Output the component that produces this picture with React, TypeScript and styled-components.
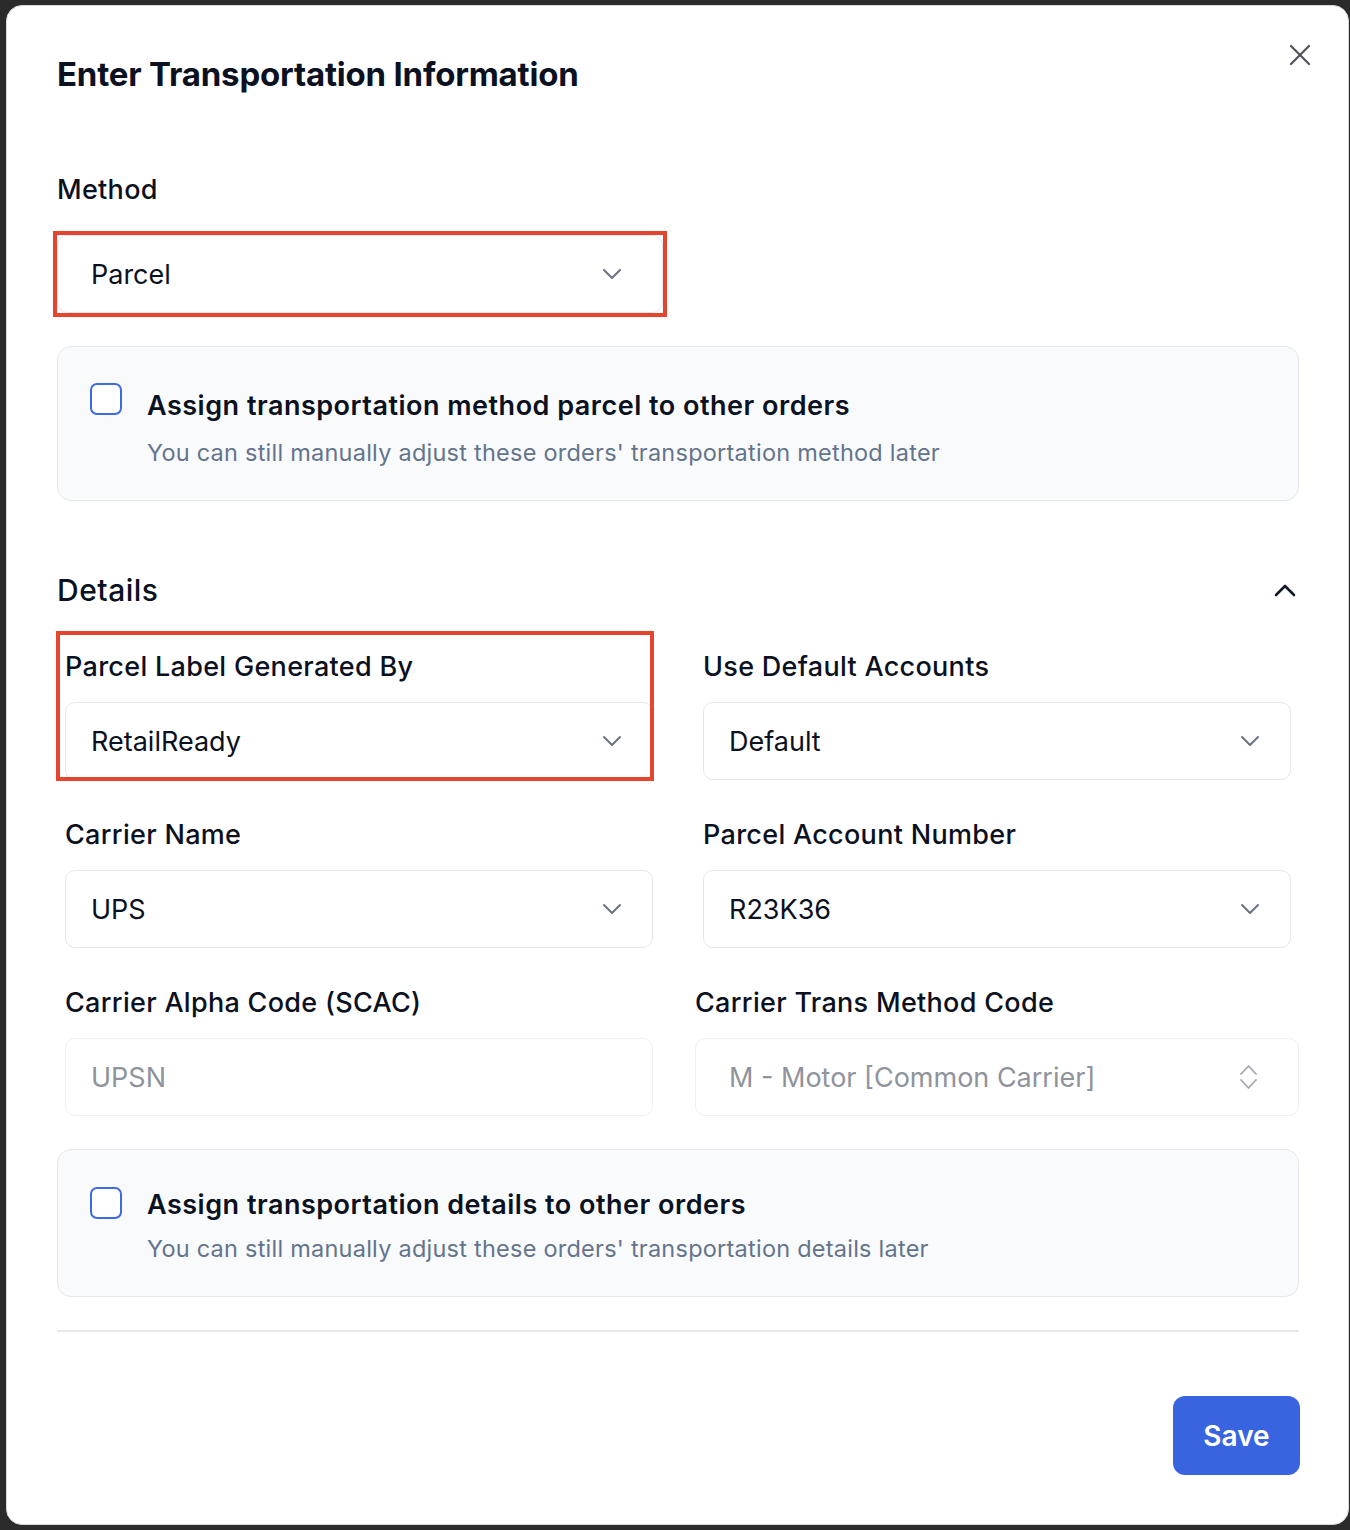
import React from "react";
import styled, { createGlobalStyle } from "styled-components";

const Global = createGlobalStyle`
  html, body { margin: 0; padding: 0; background: #2b2b2b; }
  body { font-family: Inter, "Noto Sans", "Liberation Sans", sans-serif; color: #0f172a; }
  * { box-sizing: border-box; }
`;

const Page = styled.div`
  padding: 5px 1px 5px 6px;
  background: #2b2b2b;
`;

const Modal = styled.div`
  position: relative;
  background: #ffffff;
  border: 1px solid #d6dae0;
  border-radius: 16px;
  padding: 48px 49px 49px 50px;
  display: flex;
  flex-direction: column;
`;

const Title = styled.h1`
  margin: 0;
  font-size: 33px;
  line-height: 40px;
  font-weight: 700;
  letter-spacing: -0.2px;
  color: #0b1120;
`;

const CloseButton = styled.button`
  position: absolute;
  top: 34px;
  right: 33px;
  width: 30px;
  height: 30px;
  border: none;
  background: transparent;
  padding: 0;
  display: flex;
  align-items: center;
  justify-content: center;
  color: #52525b;
  cursor: pointer;
`;

const Label = styled.div<{ $mt?: number }>`
  font-size: 27px;
  line-height: 32px;
  font-weight: 500;
  letter-spacing: 0.3px;
  color: #0b1120;
  margin-top: ${(p) => p.$mt ?? 0}px;
`;

const Highlight = styled.div<{ $t: number; $r: number; $b: number; $l: number }>`
  position: relative;
  &::after {
    content: "";
    position: absolute;
    top: ${(p) => p.$t}px;
    right: ${(p) => p.$r}px;
    bottom: ${(p) => p.$b}px;
    left: ${(p) => p.$l}px;
    border: 4px solid #e5452f;
    pointer-events: none;
    z-index: 2;
  }
`;

const SelectBox = styled.div<{ $wide?: boolean; $disabled?: boolean; $w?: number }>`
  height: 78px;
  flex: none;
  width: ${(p) => (p.$w ? `${p.$w}px` : "100%")};
  border: 1px solid ${(p) => (p.$disabled ? "#eff1f4" : "#e3e6ea")};
  border-radius: 10px;
  background: #ffffff;
  display: flex;
  align-items: center;
  justify-content: space-between;
  padding: 0 ${(p) => (p.$wide ? 40 : 30)}px 0 ${(p) => (p.$wide ? 33 : 25)}px;
  font-size: 27px;
  font-weight: 400;
  color: ${(p) => (p.$disabled ? "#8e939c" : "#0b1120")};
`;

const Card = styled.div<{ $pt: number; $shift: number; $gap: number }>`
  margin-top: 33px;
  background: #f9fafb;
  border: 1px solid #e4e7eb;
  border-radius: 14px;
  padding: ${(p) => p.$pt}px 32px 32px 32px;
  display: flex;
  align-items: flex-start;
  gap: 25px;
  & > div:last-child { margin-top: ${(p) => p.$shift}px; }
  & > div:last-child > div:last-child { margin-top: ${(p) => p.$gap}px; }
`;

const Checkbox = styled.div`
  width: 32px;
  height: 32px;
  flex: none;
  border: 2px solid #3d6be3;
  border-radius: 7px;
  background: #ffffff;
`;

const CardText = styled.div`
  display: flex;
  flex-direction: column;
`;

const CardTitle = styled.div`
  font-size: 27px;
  line-height: 32px;
  font-weight: 600;
  letter-spacing: 0.5px;
  color: #0b1120;
`;

const CardSub = styled.div`
  font-size: 23.5px;
  line-height: 30px;
  font-weight: 400;
  letter-spacing: 0.24px;
  color: #64748b;
`;

const SectionHeader = styled.div`
  margin-top: 71px;
  display: flex;
  align-items: center;
  justify-content: space-between;
  padding-right: 3px;
`;

const SectionTitle = styled.h2`
  margin: 0;
  font-size: 30px;
  line-height: 36px;
  font-weight: 500;
  letter-spacing: 0.5px;
  color: #0b1120;
`;

const Grid = styled.div`
  margin-top: 43px;
  padding: 0 8px;
  display: grid;
  grid-template-columns: 1fr 1fr;
  column-gap: 50px;
  row-gap: 39px;
`;

const Field = styled.div<{ $wide?: boolean }>`
  display: flex;
  flex-direction: column;
  gap: 19px;
  margin: 0 ${(p) => (p.$wide ? -8 : 0)}px;
`;

const Divider = styled.hr`
  margin: 33px 0 0 0;
  border: none;
  height: 2px;
  background: #e5e9ef;
`;

const Footer = styled.div`
  margin-top: 64px;
  display: flex;
  justify-content: flex-end;
`;

const SaveButton = styled.button`
  width: 127px;
  height: 79px;
  margin-right: -1px;
  border: none;
  border-radius: 12px;
  background: #3864e0;
  color: #ffffff;
  font-family: Inter, "Noto Sans", sans-serif;
  font-size: 28px;
  font-weight: 600;
  cursor: pointer;
`;

const ChevronDown = () => (
  <svg width="20" height="12" viewBox="0 0 20 12" fill="none">
    <polyline points="2,2 10,10 18,2" stroke="#6b7280" strokeWidth="2" strokeLinecap="round" strokeLinejoin="round" />
  </svg>
);

const ChevronUp = () => (
  <svg width="22" height="14" viewBox="0 0 22 14" fill="none">
    <polyline points="2,12 11,3 20,12" stroke="#111827" strokeWidth="2.6" strokeLinecap="round" strokeLinejoin="round" />
  </svg>
);

const ChevronsUpDown = () => (
  <svg width="19" height="26" viewBox="0 0 19 26" fill="none">
    <polyline points="2,10 9.5,2 17,10" stroke="#a3a8b0" strokeWidth="1.8" strokeLinecap="round" strokeLinejoin="round" />
    <polyline points="2,16 9.5,24 17,16" stroke="#a3a8b0" strokeWidth="1.8" strokeLinecap="round" strokeLinejoin="round" />
  </svg>
);

const CloseIcon = () => (
  <svg width="22" height="22" viewBox="0 0 22 22" fill="none">
    <line x1="2" y1="2" x2="20" y2="20" stroke="#52525b" strokeWidth="2.2" strokeLinecap="round" />
    <line x1="20" y1="2" x2="2" y2="20" stroke="#52525b" strokeWidth="2.2" strokeLinecap="round" />
  </svg>
);

type SelectProps = { value: string; wide?: boolean; disabled?: boolean; updown?: boolean; w?: number };

const Select = ({ value, wide, disabled, updown, w }: SelectProps) => (
  <SelectBox $wide={wide} $disabled={disabled} $w={w}>
    <span>{value}</span>
    {updown ? <ChevronsUpDown /> : disabled ? null : <ChevronDown />}
  </SelectBox>
);

const AssignCard = ({ title, sub, pt, shift, gap }: { title: string; sub: string; pt: number; shift: number; gap: number }) => (
  <Card $pt={pt} $shift={shift} $gap={gap}>
    <Checkbox />
    <CardText>
      <CardTitle>{title}</CardTitle>
      <CardSub>{sub}</CardSub>
    </CardText>
  </Card>
);

export default function App() {
  return (
    <>
      <Global />
      <Page>
        <Modal>
          <CloseButton aria-label="Close">
            <CloseIcon />
          </CloseButton>
          <Title>Enter Transportation Information</Title>

          <Label $mt={80}>Method</Label>
          <Highlight $t={-4} $r={-4} $b={-4} $l={-4} style={{ marginTop: 29, width: 606 }}>
            <Select value="Parcel" wide w={606} />
          </Highlight>

          <AssignCard
            pt={36}
            shift={7}
            gap={16}
            title="Assign transportation method parcel to other orders"
            sub="You can still manually adjust these orders' transportation method later"
          />

          <SectionHeader>
            <SectionTitle>Details</SectionTitle>
            <ChevronUp />
          </SectionHeader>

          <Grid>
            <Highlight $t={-20} $r={-1} $b={-1} $l={-9}>
              <Field>
                <Label>Parcel Label Generated By</Label>
                <Select value="RetailReady" />
              </Field>
            </Highlight>
            <Field>
              <Label>Use Default Accounts</Label>
              <Select value="Default" />
            </Field>
            <Field>
              <Label>Carrier Name</Label>
              <Select value="UPS" />
            </Field>
            <Field>
              <Label>Parcel Account Number</Label>
              <Select value="R23K36" />
            </Field>
            <Field>
              <Label>Carrier Alpha Code (SCAC)</Label>
              <Select value="UPSN" disabled />
            </Field>
            <Field $wide>
              <Label>Carrier Trans Method Code</Label>
              <Select value="M - Motor [Common Carrier]" wide disabled updown />
            </Field>
          </Grid>

          <AssignCard
            pt={37}
            shift={2}
            gap={13}
            title="Assign transportation details to other orders"
            sub="You can still manually adjust these orders' transportation details later"
          />

          <Divider />

          <Footer>
            <SaveButton>Save</SaveButton>
          </Footer>
        </Modal>
      </Page>
    </>
  );
}
